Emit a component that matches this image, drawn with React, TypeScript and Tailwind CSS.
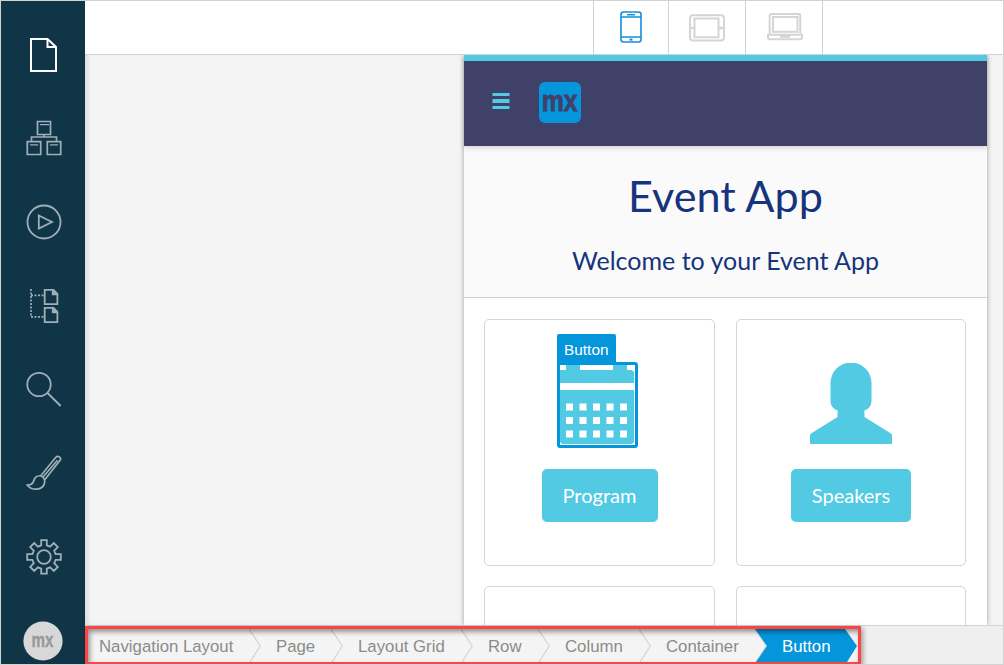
import React from "react";

const line = {
  fill: "none",
  stroke: "currentColor",
  strokeWidth: 2,
} as const;

function Icon({ children }: { children: React.ReactNode }) {
  return (
    <svg viewBox="0 0 36 36" className="block h-9 w-9 shrink-0" {...line}>
      {children}
    </svg>
  );
}

function Sidebar() {
  return (
    <nav className="z-10 flex w-[84px] shrink-0 flex-col items-center gap-[47.7px] bg-[#103547] pt-[35.5px] pl-px text-[#9fafb7]">
      <span className="text-white">
        <Icon>
          <path d="M5 2h16.5l8.5 8v24H5z" />
          <path d="M21.5 2v8H30" />
        </Icon>
      </span>
      <Icon>
        <path strokeWidth="1.7" d="M11.5 1.5h13v13h-13zM1.3 21.7h13.4v12.8H1.3zM21.3 21.7h13.4v12.8H21.3zM18 14.5V17M5.5 21v-4h25v4" />
        <path strokeWidth="1.4" d="M14 4.6h9M4 24.9h8M24 24.9h8" />
      </Icon>
      <Icon>
        <circle cx="18" cy="18" r="16.5" strokeWidth="1.8" />
        <path strokeWidth="1.8" d="M12.8 11.5 26 18l-13.2 6.5z" />
      </Icon>
      <Icon>
        <path strokeWidth="1.8" d="M18.7 1.8h8.8l3.9 4v10.4H18.7zM18.7 19.8h8.8l3.9 4v10.4H18.7z" />
        <path strokeWidth="1.3" fill="currentColor" d="M26.5 2v4.5H31zM26.5 20v4.5H31z" />
        <path strokeWidth="1.7" strokeDasharray="2 1.5" d="M5 1v27.8M5 7.4h13M5 28.8h13" />
      </Icon>
      <Icon>
        <circle cx="13" cy="13.500" r="11.7" strokeWidth="1.8" />
        <path strokeWidth="1.8" d="m21.5 22 13.2 13" />
      </Icon>
      <Icon>
        <path strokeWidth="1.7" d="M14.8 20.8 29.6 2.5c2.3-2.4 5.7-.5 4.8 2.4L18.8 24.7M16.8 22.3 31.5 5.3M14.8 20.8c-6.7-.5-6.3 4.1-8 7-1.3 2.1-3.3 2.3-5.5 2.4 5 6 14.9 4.8 17-1.3 1.1-3.4-.3-7-3.5-8.1Z" />
      </Icon>
      <Icon>
        <path
          strokeWidth="1.8"
          d="M15.2 1.2h5.6v5.1l3.3 1.4 3.7-3.6 4 4-3.6 3.7 1.4 3.4h5.2v5.6h-5.2l-1.4 3.4 3.6 3.7-4 4-3.7-3.6-3.3 1.4v5h-5.6v-5l-3.3-1.4-3.7 3.6-4-4 3.6-3.7-1.4-3.4H1.2v-5.6h5.2l1.4-3.4-3.6-3.7 4-4 3.7 3.6 3.3-1.4z"
        />
        <circle cx="18" cy="18" r="6.8" strokeWidth="1.8" />
      </Icon>
      <svg viewBox="0 0 40 40" className="-mt-px mr-px block h-10 w-10 shrink-0">
        <circle cx="20" cy="20" r="19.6" fill="#d8d8d8" />
        <text x="8.5" y="25.5" textLength="22" lengthAdjust="spacingAndGlyphs" fill="#999" stroke="#999" strokeWidth="0.4" className="font-['Liberation_Sans',sans-serif] text-[20px] font-bold">
          mx
        </text>
      </svg>
    </nav>
  );
}

function DeviceBar() {
  return (
    <header className="flex h-[54px] shrink-0 border-b border-[#d2d2d2] bg-white">
      <div className="flex pl-[508px]">
        <button className="flex w-[75px] items-center justify-center border-l border-[#d2d2d2] pb-[2px] text-[#148ddb]">
          <svg viewBox="0 0 22 32" className="h-8 w-[22px]" {...line} strokeWidth="1.6">
            <rect x="1" y="1" width="20" height="30" rx="2.5" />
            <path d="M1 6h20M1 26h20M7 3.7h8" />
            <path strokeWidth="2" d="M9.5 28.6h3" />
          </svg>
        </button>
        <button className="flex w-[77px] items-center justify-center border-l border-[#d2d2d2] pb-[2px] text-[#d5d5d5]">
          <svg viewBox="0 0 36 28" className="mt-0.5 h-7 w-9" {...line} strokeWidth="2">
            <rect x="1" y="1.2" width="34" height="25.2" rx="3" />
            <rect x="5.5" y="4.5" width="24" height="18.8" />
            <path d="M1.5 14h4M30 14h4M32.3 12.5v3" />
          </svg>
        </button>
        <button className="flex w-[78px] items-center justify-center border-x border-[#d2d2d2] pb-[2px] text-[#d5d5d5]">
          <svg viewBox="0 0 36 28" className="ml-px mt-px h-7 w-9" {...line} strokeWidth="2">
            <path d="M2.7 21.5V2.8Q2.7 1 4.5 1h27q1.8 0 1.8 1.8v18.7" />
            <rect x="6" y="4" width="24.5" height="14.8" />
            <path d="M1 21.8h34v2.5q0 2-2 2H3q-2 0-2-2zM14 22v1.8h8V22" />
          </svg>
        </button>
      </div>
    </header>
  );
}

function CalendarIcon() {
  return (
    <svg viewBox="0 0 75 80" className="block h-20 w-[75px]">
      <path fill="#53cae4" d="M0 5h6V0h14v5h33V0h14v5h5l2 2V18H0zM0 25h74v52l-2 2H2L0 77z" />
      <g fill="#fff">
        {[38.5, 52, 65.5].map((y) =>
          [6, 19.5, 33, 46.5, 60].map((x) => <rect key={`${x}-${y}`} x={x} y={y} width="7" height="7" />)
        )}
      </g>
    </svg>
  );
}

function Preview() {
  return (
    <section className="ml-[379px] flex w-[523px] flex-col bg-white font-['Lato',sans-serif] shadow-[0_0_5px_rgba(0,0,0,0.35)]">
      <div className="z-10 flex h-[91px] shrink-0 items-center border-t-[6px] border-[#53cae4] bg-[#3f4168] pl-7 shadow-[0_2px_5px_rgba(0,0,0,0.15)]">
        <svg viewBox="0 0 18 17" className="mb-[5px] h-[17px] w-[18px]" fill="#53cae4">
          <path d="M.5 0h17v3H.5zM.5 6h17v4H.5zM.5 13h17v3H.5z" />
        </svg>
        <svg viewBox="0 0 42 41" className="mb-0.5 ml-[29px] h-[41px] w-[42px] overflow-visible">
          <rect width="42" height="41" rx="6" fill="#0595db" />
          <text x="2.7" y="28.7" textLength="36" lengthAdjust="spacingAndGlyphs" fill="#3f4168" stroke="#3f4168" strokeWidth="0.8" className="font-['Liberation_Sans',sans-serif] text-[30px] font-bold">
            mx
          </text>
        </svg>
      </div>
      <div className="flex h-[152px] shrink-0 flex-col items-center border-b border-[#d2d2d2] bg-[#fafafa] pt-[23px] text-[#16347b]">
        <h1 className="text-[43.2px] leading-[52px]">Event App</h1>
        <h2 className="mt-[22px] text-[25px] leading-[34px]">Welcome to your Event App</h2>
      </div>
      <div className="grid grid-cols-[231px_230px] grid-rows-[247px_247px] gap-x-[21px] gap-y-5 pt-[21px] pl-5">
        <article className="flex flex-col items-center rounded-[5px] border border-[#d5d5d5] pt-3.5">
          <div className="-ml-1 flex flex-col items-start">
            <span className="h-7 w-[59px] rounded-t-[2px] bg-[#0595db] pl-[7px] font-['Liberation_Sans',sans-serif] text-[15.4px] leading-[32px] text-white">
              Button
            </span>
            <div className="h-[86px] w-[81px] rounded-[3px] rounded-tl-none border-[3px] border-[#0595db]">
              <CalendarIcon />
            </div>
          </div>
          <button className="mt-[21px] h-[53px] w-[116px] rounded-[5px] bg-[#53cae4] pb-0.5 text-[20px] text-white">Program</button>
        </article>
        <article className="flex flex-col items-center rounded-[5px] border border-[#d5d5d5] pt-[43px]">
          <svg viewBox="0 0 82 81" className="h-[81px] w-[82px]" fill="#53cae4">
            <path d="M20.5 20a20.5 20.5 0 0 1 41 0v18q0 6-5.500 9h-1.5v7l26.500 16.500q1 1 1 2V80q0 1-1 1H1q-1 0-1-1v-7.500q0-1 1-2L27.500 54v-7H26q-5.500-3-5.500-9z" />
          </svg>
          <button className="mt-[25px] h-[53px] w-[120px] rounded-[5px] bg-[#53cae4] pb-0.5 text-[20px] text-white">Speakers</button>
        </article>
        <article className="rounded-[5px] border border-[#d5d5d5]" />
        <article className="rounded-[5px] border border-[#d5d5d5]" />
      </div>
    </section>
  );
}

const crumbs = [
  { label: "Navigation Layout", box: "w-[173px] pl-[11px]" },
  { label: "Page", box: "w-[82px] pl-[15px]" },
  { label: "Layout Grid", box: "w-[130px] pl-[15px]" },
  { label: "Row", box: "w-[77px] pl-[15px]" },
  { label: "Column", box: "w-[101px] pl-[15px]" },
  { label: "Container", box: "w-[116px] pl-[15px]" },
];

function Breadcrumb() {
  return (
    <footer className="z-20 flex h-[39px] shrink-0 border-t border-[#d2d2d2] bg-[#efefef] font-['Liberation_Sans',sans-serif] text-[16.8px] text-[#8b8b8b]">
      <ol className="relative flex h-[39px] w-[776px] border-[3px] border-[#fc4444] bg-[#f4f4f4] shadow-[2px_2px_5px_rgba(0,0,0,0.35)]">
        {crumbs.map(({ label, box }) => (
          <li key={label} className={`flex shrink-0 items-center justify-between whitespace-nowrap ${box}`}>
            <span className="pt-0.5">{label}</span>
            <svg viewBox="0 0 12 33" className="h-[33px] w-3 shrink-0" fill="none" stroke="#d5d5d5" strokeWidth="1.3">
              <path d="M0 0 11.3 17 1 33" />
            </svg>
          </li>
        ))}
        <li className="-ml-3 flex w-[102px] shrink-0 items-center bg-[#0595db] pl-[27px] text-white [clip-path:polygon(0_0,90px_0,102px_17px,92px_100%,1px_100%,12px_17px)]">
          <span className="pt-0.5">Button</span>
        </li>
        <span className="pointer-events-none absolute inset-0 shadow-[inset_2px_3px_5px_rgba(0,0,0,0.4)]" />
      </ol>
    </footer>
  );
}

export default function App() {
  return (
    <div className="flex h-[665px] w-[1004px] overflow-hidden border border-[#d2d2d2] bg-[#f4f4f4]">
      <Sidebar />
      <main className="z-20 flex min-w-0 flex-1 flex-col">
        <DeviceBar />
        <div className="flex min-h-0 flex-1 overflow-hidden bg-[linear-gradient(to_right,#dcdcdc,#f4f4f4_6px)]">
          <Preview />
        </div>
        <Breadcrumb />
      </main>
    </div>
  );
}
